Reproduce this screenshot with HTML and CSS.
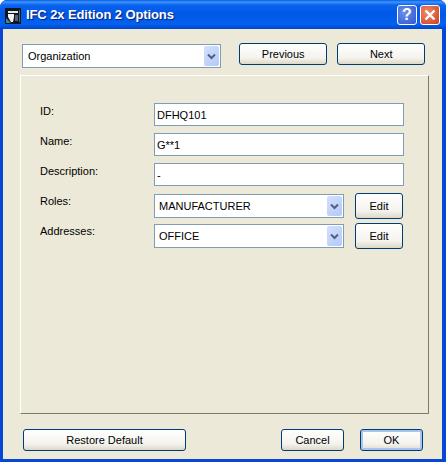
FILE: index.html
```html
<!DOCTYPE html>
<html lang="en">
<head>
    <meta charset="UTF-8">
    <title>IFC 2x Edition 2 Options</title>
    <link rel="stylesheet" href="styles.css">
</head>
<body>
    <div class="window">
        <div class="titlebar">
            <svg class="app-icon" width="16" height="16" viewBox="0 0 16 16">
                <rect width="16" height="16" fill="#10161e"/>
                <path d="M1 10l5 5H1z" fill="#2f8fa8"/>
                <path d="M3 3h10v2H3z" fill="#e6e8ea"/>
                <path d="M3 6h6v3l-1 5H6L3 9z" fill="#f4f4f4"/>
                <path d="M10 7h3v6h-3z" fill="#59636e"/>
                <path d="M14 2h1v12h-1z" fill="#3c6f88"/>
            </svg>
            <span class="title">IFC 2x Edition 2 Options</span>
            <div class="caption-btns">
                <div class="caption-btn help">?</div>
                <div class="caption-btn close">
                    <svg width="14" height="14" viewBox="0 0 14 14">
                        <path d="M2.5 2.5l9 9M11.5 2.5l-9 9" stroke="#fff" stroke-width="2.4" fill="none"/>
                    </svg>
                </div>
            </div>
        </div>

        <div class="content">
            <div class="top-row">
                <div class="combo combo-top">
                    <span class="combo-text">Organization</span>
                    <span class="combo-arrow"><svg width="9" height="7" viewBox="0 0 9 7"><path d="M1 1.5l3.5 3.5L8 1.5" stroke="#4d6185" stroke-width="2" fill="none"/></svg></span>
                </div>
                <button class="btn btn-prev">Previous</button>
                <button class="btn btn-next">Next</button>
            </div>

            <div class="panel">
                <div class="row">
                    <label>ID:</label>
                    <div class="field">DFHQ101</div>
                </div>
                <div class="row">
                    <label>Name:</label>
                    <div class="field">G**1</div>
                </div>
                <div class="row">
                    <label>Description:</label>
                    <div class="field">-</div>
                </div>
                <div class="row">
                    <label>Roles:</label>
                    <div class="combo combo-row">
                        <span class="combo-text">MANUFACTURER</span>
                        <span class="combo-arrow"><svg width="9" height="7" viewBox="0 0 9 7"><path d="M1 1.5l3.5 3.5L8 1.5" stroke="#4d6185" stroke-width="2" fill="none"/></svg></span>
                    </div>
                    <button class="btn btn-edit">Edit</button>
                </div>
                <div class="row">
                    <label>Addresses:</label>
                    <div class="combo combo-row">
                        <span class="combo-text">OFFICE</span>
                        <span class="combo-arrow"><svg width="9" height="7" viewBox="0 0 9 7"><path d="M1 1.5l3.5 3.5L8 1.5" stroke="#4d6185" stroke-width="2" fill="none"/></svg></span>
                    </div>
                    <button class="btn btn-edit">Edit</button>
                </div>
            </div>

            <div class="bottom-row">
                <button class="btn btn-restore">Restore Default</button>
                <button class="btn btn-cancel">Cancel</button>
                <button class="btn btn-ok">OK</button>
            </div>
        </div>
    </div>
</body>
</html>
```

FILE: styles.css
```css
* {
    box-sizing: border-box;
}
body {
    margin: 0;
    font-family: 'Liberation Sans', sans-serif;
    font-size: 11px;
    color: #000;
}
.window {
    width: 446px;
    height: 462px;
    display: flex;
    flex-direction: column;
    background: #0846d8;
    border-radius: 7px 7px 0 0;
    overflow: hidden;
}
.titlebar {
    height: 29px;
    display: flex;
    align-items: center;
    padding: 0 6px 0 5px;
    background: linear-gradient(#0a5be0 0, #3d95ff 2px, #0a63ee 5px, #0058e6 14px, #0461f0 24px, #0047cc 29px);
}
.app-icon {
    flex: none;
    margin: 2px 5px 0 0;
}
.title {
    font-size: 13px;
    font-weight: bold;
    letter-spacing: -0.1px;
    color: #fff;
    text-shadow: 1px 1px 1px #0f1f7a;
    flex: 1;
}
.caption-btns {
    display: flex;
    gap: 3px;
}
.caption-btn {
    width: 20px;
    height: 20px;
    border: 1px solid #fff;
    border-radius: 3px;
    display: flex;
    align-items: center;
    justify-content: center;
}
.help {
    background: radial-gradient(circle at 35% 35%, #6a8ff0, #2f55cf);
    color: #fff;
    font-size: 16px;
    font-weight: bold;
}
.close {
    background: radial-gradient(circle at 35% 35%, #ee8a6c, #cf3f1c);
}
.content {
    flex: 1;
    margin: 0 4px 3px 3px;
    padding: 14px 17px 0 17px;
    background: #ece9d8;
    display: flex;
    flex-direction: column;
}
.top-row {
    display: flex;
    height: 32px;
    align-items: flex-start;
}
.btn {
    font-family: inherit;
    font-size: 11px;
    color: #000;
    padding: 0;
    border: 1px solid #003c74;
    border-radius: 3px;
    background: linear-gradient(#fff, #f4f3ee 70%, #dcd8c8);
}
.combo {
    background: #fff;
    border: 1px solid #7f9db9;
    display: flex;
    align-items: center;
    justify-content: space-between;
    padding: 1px;
}
.combo-text {
    padding-left: 3px;
}
.combo-arrow {
    width: 15px;
    height: 100%;
    border-radius: 2px;
    background: linear-gradient(135deg, #d5e0fc, #b4c9f7);
    display: flex;
    align-items: center;
    justify-content: center;
}
.combo-top {
    width: 200px;
    height: 24px;
    margin: 1px 18px 0 2px;
}
.combo-top .combo-text {
    padding-left: 4px;
}
.btn-prev {
    width: 89px;
    height: 22px;
    margin-right: 10px;
}
.btn-next {
    width: 88px;
    height: 22px;
}
.panel {
    width: 409px;
    height: 339px;
    border: 1px solid;
    border-color: #fff #7d7b6c #7d7b6c #fff;
    padding: 24px 0 0 19px;
}
.row {
    display: flex;
    align-items: flex-start;
    height: 30px;
    padding-top: 3px;
}
.row label {
    width: 114px;
    line-height: 16px;
}
.field {
    width: 250px;
    height: 23px;
    background: #fff;
    border: 1px solid #7f9db9;
    padding-left: 2px;
    line-height: 22px;
}
.combo-row {
    width: 190px;
    height: 24px;
    margin: 1px 11px 0 0;
}
.btn-edit {
    width: 48px;
    height: 26px;
}
.bottom-row {
    display: flex;
    margin-top: 15px;
}
.btn-restore {
    width: 163px;
    height: 22px;
    margin: 0 95px 0 3px;
}
.btn-cancel {
    width: 63px;
    height: 22px;
    margin-right: 16px;
}
.btn-ok {
    width: 63px;
    height: 22px;
    box-shadow: inset 0 0 0 2px #a9c4ef;
}
```
